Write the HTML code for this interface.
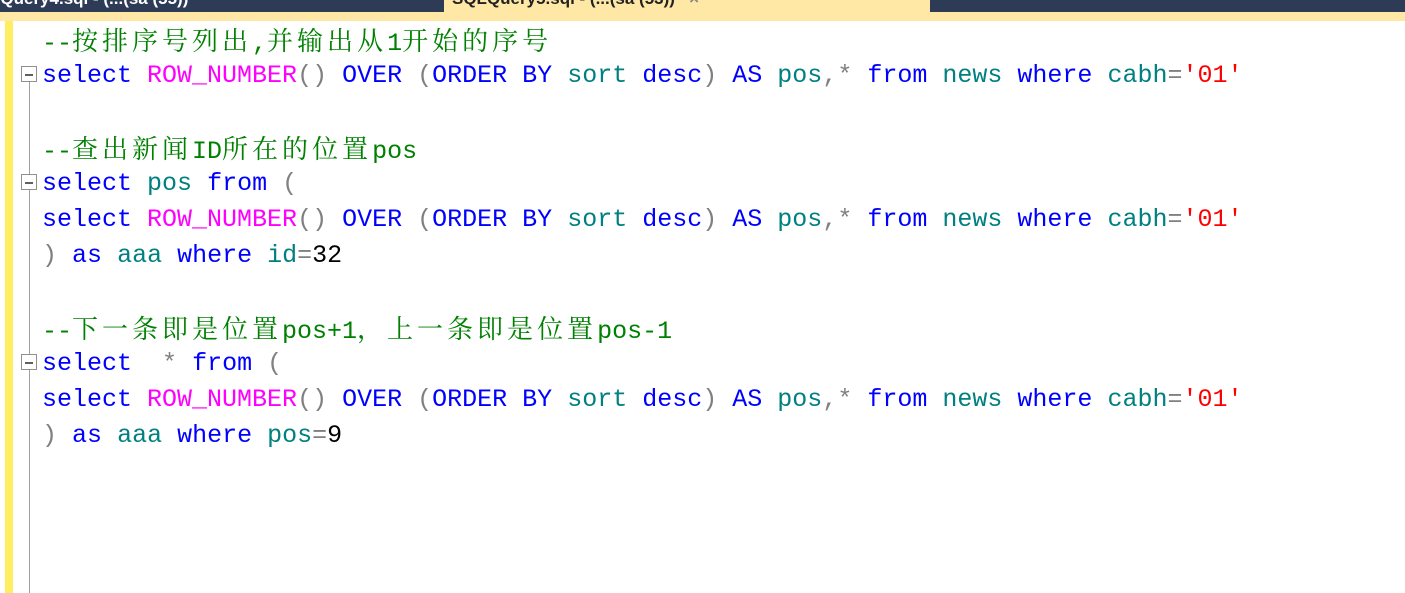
<!DOCTYPE html><html><head><meta charset="utf-8"><style>
body{margin:0;width:1405px;height:593px;overflow:hidden;background:#fff;position:relative;font-family:"Liberation Mono",monospace}
.top{position:absolute;left:0;top:0;width:1405px;height:12px;background:#2e3b57}
.strip{position:absolute;left:0;top:12px;width:1405px;height:9px;background:#ffe8a6}
.tab{position:absolute;left:444px;top:0;width:486px;height:12px;background:#ffe8a6;overflow:hidden}
.tt{position:absolute;font:bold 17px "Liberation Sans",sans-serif;top:-11px;white-space:pre}
.yb{position:absolute;left:5px;top:21px;width:8px;height:572px;background:#ffee62}
.vl{position:absolute;left:29px;top:82px;width:1px;height:511px;background:#a0a0a0}
.box{position:absolute;left:21px;width:14px;height:14px;border:1px solid #909090;background:#fff}
.box:after{content:"";position:absolute;left:3px;top:7px;width:8px;height:2px;background:#606060}
.ln{position:absolute;left:42px;font-size:25px;line-height:36px;white-space:pre;height:36px}
.z{font-family:"Noto Serif CJK SC",serif;font-size:26px;letter-spacing:4px}
.b{color:#0000ff}.m{color:#ff00ff}.t{color:#008080}.g{color:#808080}.r{color:#ff0000}.c{color:#008000}
</style></head><body>
<div class="top"><div class="tt" style="left:-10px;color:#fff">LQuery4.sql - (...(sa (55))</div></div>
<div class="tab"><div class="tt" style="left:8px;color:#222">SQLQuery5.sql - (...(sa (53))   <span style="color:#888">×</span></div></div>
<div class="strip"></div>
<div class="yb"></div>
<div class="vl"></div>
<div class="box" style="top:66px"></div>
<div class="box" style="top:174px"></div>
<div class="box" style="top:354px"></div>
<div class="ln c" style="top:22px">--<span class="z">按排序号列出</span>,<span class="z">并输出从</span>1<span class="z">开始的序号</span></div>
<div class="ln" style="top:58px"><span class="b">select</span> <span class="m">ROW_NUMBER</span><span class="g">()</span> <span class="b">OVER</span> <span class="g">(</span><span class="b">ORDER BY</span> <span class="t">sort</span> <span class="b">desc</span><span class="g">)</span> <span class="b">AS</span> <span class="t">pos</span><span class="g">,*</span> <span class="b">from</span> <span class="t">news</span> <span class="b">where</span> <span class="t">cabh</span><span class="g">=</span><span class="r">'01'</span></div>
<div class="ln c" style="top:130px">--<span class="z">查出新闻</span>ID<span class="z">所在的位置</span>pos</div>
<div class="ln" style="top:166px"><span class="b">select</span> <span class="t">pos</span> <span class="b">from</span> <span class="g">(</span></div>
<div class="ln" style="top:202px"><span class="b">select</span> <span class="m">ROW_NUMBER</span><span class="g">()</span> <span class="b">OVER</span> <span class="g">(</span><span class="b">ORDER BY</span> <span class="t">sort</span> <span class="b">desc</span><span class="g">)</span> <span class="b">AS</span> <span class="t">pos</span><span class="g">,*</span> <span class="b">from</span> <span class="t">news</span> <span class="b">where</span> <span class="t">cabh</span><span class="g">=</span><span class="r">'01'</span></div>
<div class="ln" style="top:238px"><span class="g">)</span> <span class="b">as</span> <span class="t">aaa</span> <span class="b">where</span> <span class="t">id</span><span class="g">=</span>32</div>
<div class="ln c" style="top:310px">--<span class="z">下一条即是位置</span>pos+1<span class="z">，上一条即是位置</span>pos-1</div>
<div class="ln" style="top:346px"><span class="b">select</span>  <span class="g">*</span> <span class="b">from</span> <span class="g">(</span></div>
<div class="ln" style="top:382px"><span class="b">select</span> <span class="m">ROW_NUMBER</span><span class="g">()</span> <span class="b">OVER</span> <span class="g">(</span><span class="b">ORDER BY</span> <span class="t">sort</span> <span class="b">desc</span><span class="g">)</span> <span class="b">AS</span> <span class="t">pos</span><span class="g">,*</span> <span class="b">from</span> <span class="t">news</span> <span class="b">where</span> <span class="t">cabh</span><span class="g">=</span><span class="r">'01'</span></div>
<div class="ln" style="top:418px"><span class="g">)</span> <span class="b">as</span> <span class="t">aaa</span> <span class="b">where</span> <span class="t">pos</span><span class="g">=</span>9</div>
</body></html>
